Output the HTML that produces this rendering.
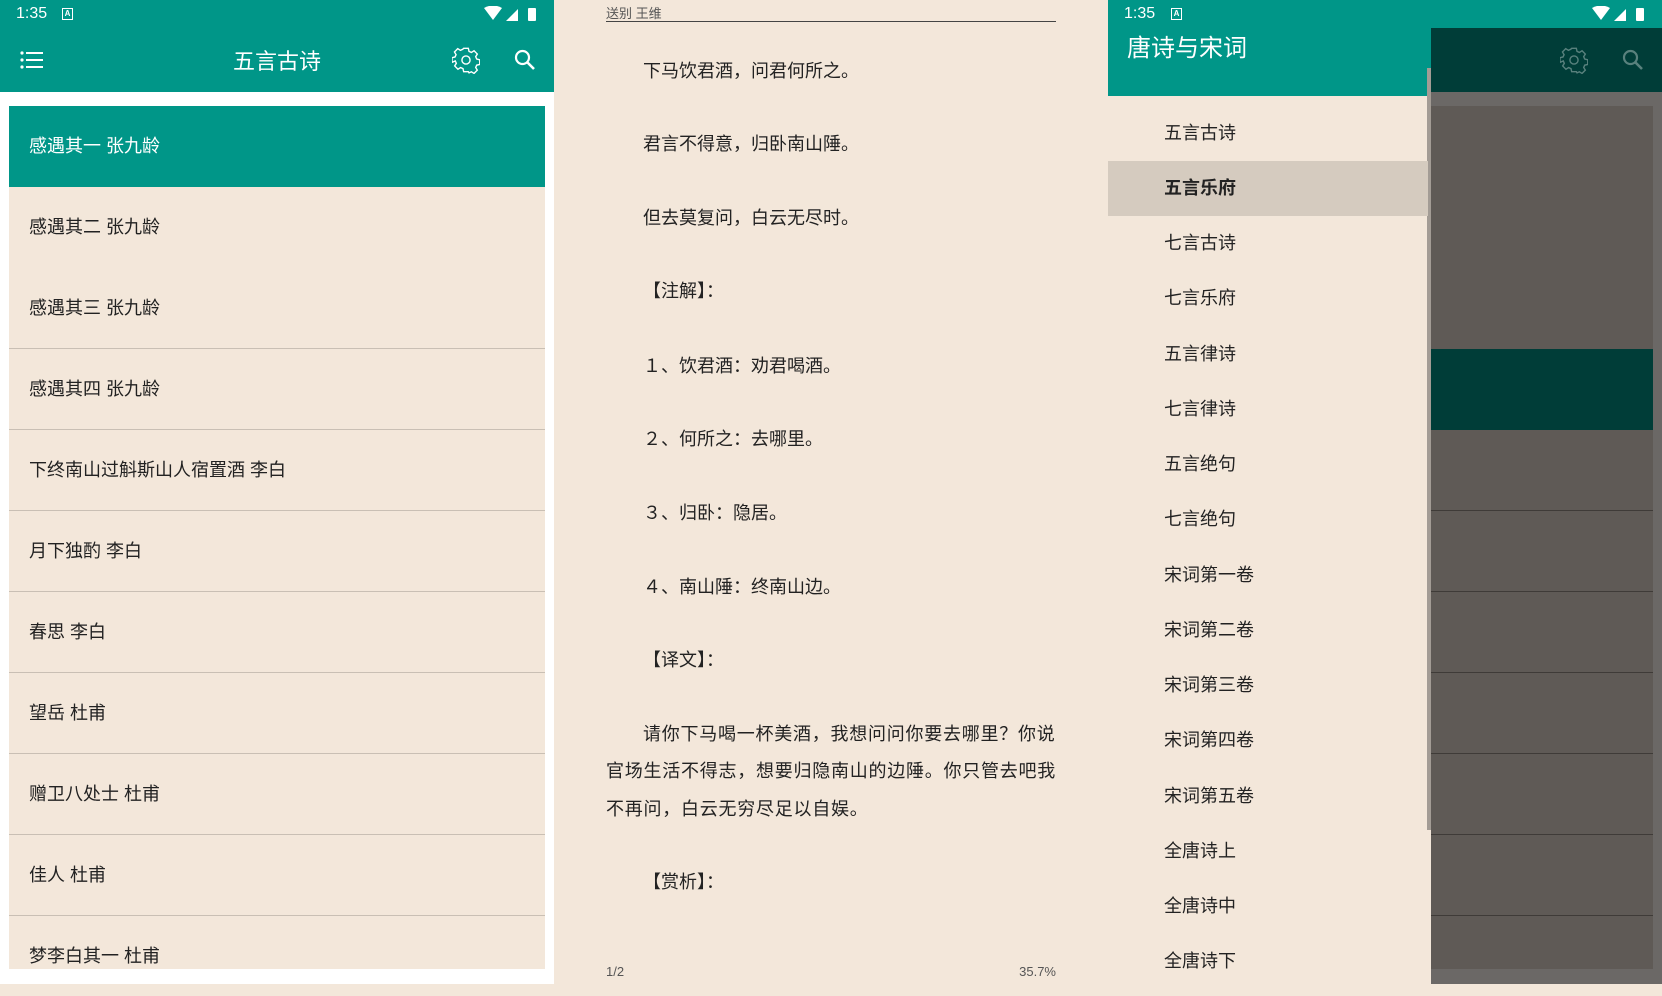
<!DOCTYPE html>
<html><head><meta charset="utf-8"><style>
*{margin:0;padding:0;box-sizing:border-box}
body{width:1662px;height:984px;overflow:hidden;position:relative;background:#f3e7da;font-family:"Liberation Sans","Noto Sans CJK SC",sans-serif}
.abs{position:absolute}
.sb{font-size:16px;color:#fff}
.item{position:absolute;left:9px;width:536px;height:81px;border-bottom:1px solid #c9bfb4;background:#f3e7da;font-size:18px;color:#222;padding-left:20px;line-height:80px}
.mt{position:absolute;left:606px;font-size:18px;color:#222;white-space:nowrap}
.di{position:absolute;left:1108px;width:320px;height:55px;font-size:18px;color:#222;padding-left:56px;line-height:55px}
.si{position:absolute;left:1431px;width:222px;height:81px;background:#5f5a56;border-bottom:1px solid #3f3b38}
.ab{position:absolute;width:11px;height:12px;border:1.5px solid #fff;font-size:8px;line-height:9px;text-align:center;color:#fff;font-weight:bold}
</style></head><body>
<!-- left panel -->
<div class="abs" style="left:0;top:0;width:554px;height:984px;background:#fff"></div>
<div class="abs" style="left:0;top:0;width:554px;height:92px;background:#009688"></div>
<div class="abs sb" style="left:16px;top:5px">1:35</div>
<div class="ab" style="left:62px;top:8px">A</div>
<svg class="abs" style="left:484px;top:6px" width="56" height="16"><path d="M0 2 Q9 -3 18 2 L9 14Z" fill="#fff"/><path d="M22 15 L34 3 L34 15Z" fill="#fff"/><rect x="44" y="2" width="8" height="13" rx="1" fill="#fff"/></svg>
<svg class="abs" style="left:20px;top:50px" width="24" height="20"><g fill="#fff"><circle cx="2" cy="3" r="1.6"/><circle cx="2" cy="10" r="1.6"/><circle cx="2" cy="17" r="1.6"/><rect x="6" y="2" width="17" height="2"/><rect x="6" y="9" width="17" height="2"/><rect x="6" y="16" width="17" height="2"/></g></svg>
<div class="abs" style="left:0;width:554px;top:44px;text-align:center;color:#fff;font-size:22px">五言古诗</div>
<svg class="abs" style="left:452px;top:46px" width="28" height="28" viewBox="0 0 24 24"><path fill="none" stroke="#fff" stroke-width="1.2" d="M10 2h4l.6 2.6 2 .9 2.3-1.4 2.8 2.8-1.4 2.3.9 2 2.6.6v4l-2.6.6-.9 2 1.4 2.3-2.8 2.8-2.3-1.4-2 .9L14 22h-4l-.6-2.6-2-.9-2.3 1.4-2.8-2.8 1.4-2.3-.9-2L0 14v-4l2.6-.6.9-2-1.4-2.3 2.8-2.8 2.3 1.4 2-.9z"/><circle cx="12" cy="12" r="3.5" fill="none" stroke="#fff" stroke-width="1.2"/></svg>
<svg class="abs" style="left:514px;top:49px" width="22" height="22"><circle cx="8.5" cy="8.5" r="6.5" fill="none" stroke="#fff" stroke-width="2.2"/><path d="M13 13 L20 20" stroke="#fff" stroke-width="2.6"/></svg>
<div class="item" style="top:106px;background:#009688;color:#fff;border:none">感遇其一 张九龄</div>
<div class="item" style="top:187px;border:none">感遇其二 张九龄</div>
<div class="item" style="top:268px">感遇其三 张九龄</div>
<div class="item" style="top:349px">感遇其四 张九龄</div>
<div class="item" style="top:430px">下终南山过斛斯山人宿置酒 李白</div>
<div class="item" style="top:511px">月下独酌 李白</div>
<div class="item" style="top:592px">春思 李白</div>
<div class="item" style="top:673px">望岳 杜甫</div>
<div class="item" style="top:754px">赠卫八处士 杜甫</div>
<div class="item" style="top:835px">佳人 杜甫</div>
<div class="item" style="top:916px;height:53px;border:none">梦李白其一 杜甫</div>
<!-- middle -->
<div class="abs" style="left:554px;top:0;width:554px;height:984px;background:#f3e7da"></div>
<div class="abs" style="left:606px;top:3px;font-size:13px;color:#555">送别 王维</div>
<div class="abs" style="left:606px;top:21px;width:450px;height:1px;background:#444"></div>
<div class="mt" style="left:643px;top:57px">下马饮君酒，问君何所之。</div>
<div class="mt" style="left:643px;top:130px">君言不得意，归卧南山陲。</div>
<div class="mt" style="left:643px;top:204px">但去莫复问，白云无尽时。</div>
<div class="mt" style="left:643px;top:277px">【注解】：</div>
<div class="mt" style="left:643px;top:352px">１、饮君酒：劝君喝酒。</div>
<div class="mt" style="left:643px;top:425px">２、何所之：去哪里。</div>
<div class="mt" style="left:643px;top:499px">３、归卧：隐居。</div>
<div class="mt" style="left:643px;top:573px">４、南山陲：终南山边。</div>
<div class="mt" style="left:643px;top:646px">【译文】：</div>
<div class="mt" style="left:643px;top:720px;letter-spacing:0.75px">请你下马喝一杯美酒，我想问问你要去哪里？你说</div>
<div class="mt" style="top:757px;letter-spacing:0.75px">官场生活不得志，想要归隐南山的边陲。你只管去吧我</div>
<div class="mt" style="top:795px;letter-spacing:0.75px">不再问，白云无穷尽足以自娱。</div>
<div class="mt" style="left:643px;top:868px">【赏析】：</div>
<div class="abs" style="left:606px;top:964px;font-size:13px;color:#555">1/2</div>
<div class="abs" style="left:1000px;width:56px;text-align:right;top:964px;font-size:13px;color:#555">35.7%</div>
<!-- right -->
<div class="abs" style="left:1108px;top:0;width:554px;height:984px;background:#6b6866"></div>
<div class="abs" style="left:1108px;top:0;width:554px;height:28px;background:#009688"></div>
<div class="abs" style="left:1431px;top:28px;width:231px;height:64px;background:#003d38"></div>
<div class="si" style="top:106px;border:none"></div><div class="si" style="top:187px;border:none"></div><div class="si" style="top:268px;border:none"></div>
<div class="si" style="top:349px;background:#003d38;border:none"></div>
<div class="si" style="top:430px"></div><div class="si" style="top:511px"></div><div class="si" style="top:592px"></div><div class="si" style="top:673px"></div><div class="si" style="top:754px"></div><div class="si" style="top:835px"></div><div class="si" style="top:916px;height:53px;border:none"></div>
<svg class="abs" style="left:1560px;top:46px;opacity:.35" width="28" height="28" viewBox="0 0 24 24"><path fill="none" stroke="#fff" stroke-width="1.2" d="M10 2h4l.6 2.6 2 .9 2.3-1.4 2.8 2.8-1.4 2.3.9 2 2.6.6v4l-2.6.6-.9 2 1.4 2.3-2.8 2.8-2.3-1.4-2 .9L14 22h-4l-.6-2.6-2-.9-2.3 1.4-2.8-2.8 1.4-2.3-.9-2L0 14v-4l2.6-.6.9-2-1.4-2.3 2.8-2.8 2.3 1.4 2-.9z"/><circle cx="12" cy="12" r="3.5" fill="none" stroke="#fff" stroke-width="1.2"/></svg>
<svg class="abs" style="left:1622px;top:49px;opacity:.35" width="22" height="22"><circle cx="8.5" cy="8.5" r="6.5" fill="none" stroke="#fff" stroke-width="2.2"/><path d="M13 13 L20 20" stroke="#fff" stroke-width="2.6"/></svg>
<div class="abs" style="left:1108px;top:0;width:323px;height:984px;background:#f3e7da"></div>
<div class="abs" style="left:1108px;top:0;width:323px;height:96px;background:#009688"></div>
<div class="abs" style="left:1427px;top:68px;width:4px;height:762px;background:#a39c95"></div>
<div class="abs sb" style="left:1124px;top:5px">1:35</div>
<div class="ab" style="left:1171px;top:8px">A</div>
<svg class="abs" style="left:1592px;top:6px" width="56" height="16"><path d="M0 2 Q9 -3 18 2 L9 14Z" fill="#fff"/><path d="M22 15 L34 3 L34 15Z" fill="#fff"/><rect x="44" y="2" width="8" height="13" rx="1" fill="#fff"/></svg>
<div class="abs" style="left:1127px;top:28px;font-size:24px;color:#fff">唐诗与宋词</div>
<div class="di" style="top:106px">五言古诗</div>
<div class="di" style="top:161px;background:#d5cbbf;font-weight:bold">五言乐府</div>
<div class="di" style="top:216px">七言古诗</div>
<div class="di" style="top:271px">七言乐府</div>
<div class="di" style="top:327px">五言律诗</div>
<div class="di" style="top:382px">七言律诗</div>
<div class="di" style="top:437px">五言绝句</div>
<div class="di" style="top:492px">七言绝句</div>
<div class="di" style="top:548px">宋词第一卷</div>
<div class="di" style="top:603px">宋词第二卷</div>
<div class="di" style="top:658px">宋词第三卷</div>
<div class="di" style="top:713px">宋词第四卷</div>
<div class="di" style="top:769px">宋词第五卷</div>
<div class="di" style="top:824px">全唐诗上</div>
<div class="di" style="top:879px">全唐诗中</div>
<div class="di" style="top:934px">全唐诗下</div>
</body></html>
